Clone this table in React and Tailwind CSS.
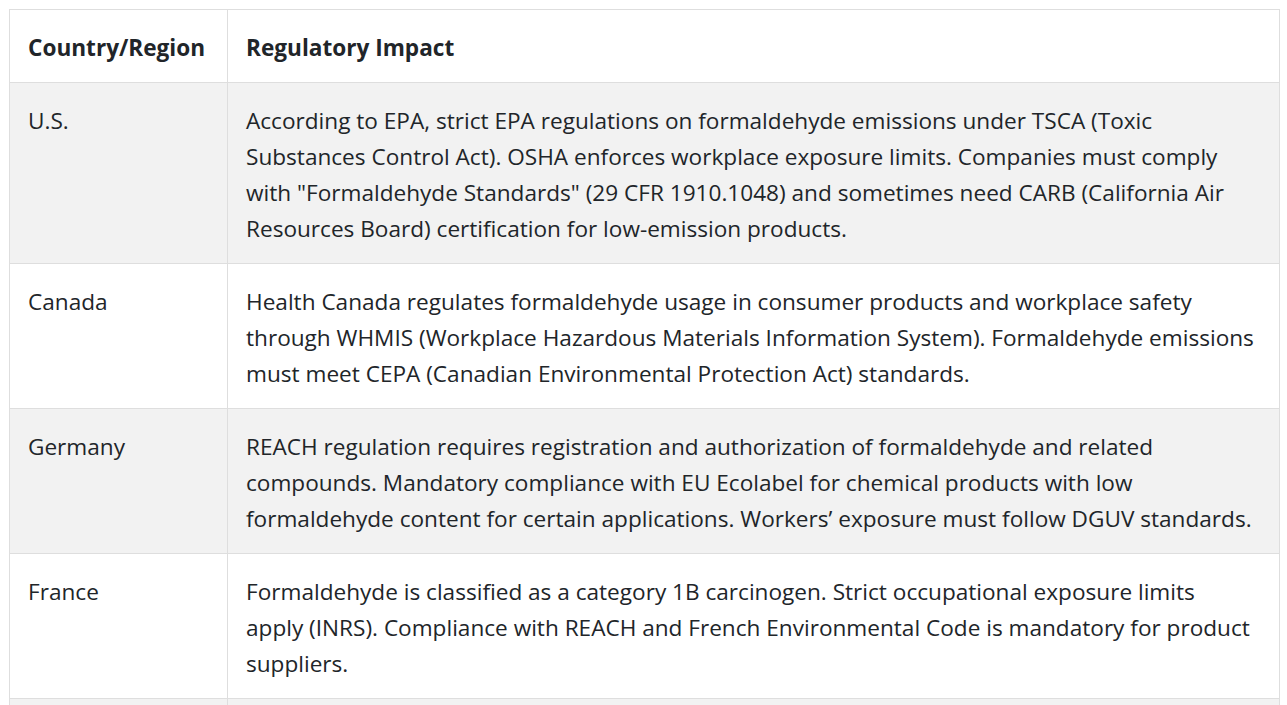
const rows = [
  {
    country: 'U.S.',
    lines: [
      'According to EPA, strict EPA regulations on formaldehyde emissions under TSCA (Toxic',
      'Substances Control Act). OSHA enforces workplace exposure limits. Companies must comply',
      'with "Formaldehyde Standards" (29 CFR 1910.1048) and sometimes need CARB (California Air',
      'Resources Board) certification for low-emission products.',
    ],
  },
  {
    country: 'Canada',
    lines: [
      'Health Canada regulates formaldehyde usage in consumer products and workplace safety',
      'through WHMIS (Workplace Hazardous Materials Information System). Formaldehyde emissions',
      'must meet CEPA (Canadian Environmental Protection Act) standards.',
    ],
  },
  {
    country: 'Germany',
    lines: [
      'REACH regulation requires registration and authorization of formaldehyde and related',
      'compounds. Mandatory compliance with EU Ecolabel for chemical products with low',
      'formaldehyde content for certain applications. Workers’ exposure must follow DGUV standards.',
    ],
  },
  {
    country: 'France',
    lines: [
      'Formaldehyde is classified as a category 1B carcinogen. Strict occupational exposure limits',
      'apply (INRS). Compliance with REACH and French Environmental Code is mandatory for product',
      'suppliers.',
    ],
  },
];

export default function App() {
  return (
    <div className="bg-white h-screen overflow-hidden pl-[9px] pt-[9px] pr-[7px] font-['Open_Sans','Noto_Sans',sans-serif] text-[#212529]">
      <table className="w-full border-collapse text-[22.6px] leading-[36px]">
        <thead>
          <tr>
            <th className="w-[218px] border border-[#dedede] px-[18px] pt-[20px] pb-[16px] text-left font-bold whitespace-nowrap">
              Country/Region
            </th>
            <th className="border border-[#dedede] px-[18px] pt-[20px] pb-[16px] text-left font-bold">Regulatory Impact</th>
          </tr>
        </thead>
        <tbody>
          {rows.map((r, i) => (
            <tr key={r.country} className={i % 2 === 0 ? 'bg-[#f2f2f2]' : 'bg-white'}>
              <td className="border border-[#dedede] px-[18px] pt-[20px] pb-[16px] align-top">{r.country}</td>
              <td className="border border-[#dedede] px-[18px] pt-[20px] pb-[16px] align-top whitespace-nowrap">
                {r.lines.map((l) => (
                  <span key={l} className="block">{l}</span>
                ))}
              </td>
            </tr>
          ))}
          <tr className="bg-[#f2f2f2]">
            <td className="h-[72px] border border-[#dedede]"></td>
            <td className="h-[72px] border border-[#dedede]"></td>
          </tr>
        </tbody>
      </table>
    </div>
  );
}
